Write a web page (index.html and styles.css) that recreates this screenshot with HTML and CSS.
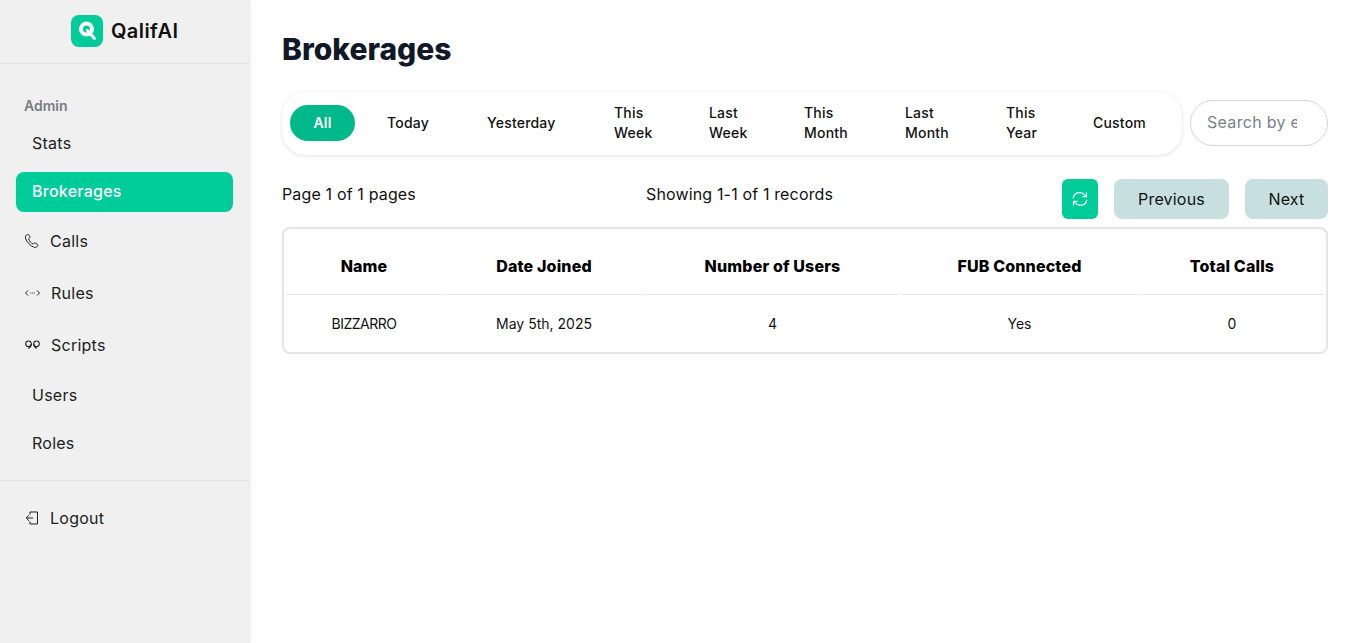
FILE: index.html
```html
<!DOCTYPE html>
<html lang="en">
<head>
    <meta charset="UTF-8">
    <meta name="viewport" content="width=device-width, initial-scale=1.0">
    <title>Brokerages</title>
    <link rel="stylesheet" href="styles.css">
</head>
<body>
    <div class="layout">
        <!-- Sidebar -->
        <aside class="sidebar">
            <div class="brand">
                <span class="brand-logo">
                    <svg viewBox="0 0 32 32" width="32" height="32" fill="none" stroke="#fff">
                        <circle cx="15.5" cy="14" r="5.500" stroke-width="4"/>
                        <path d="M16.500 15.500l7 8" stroke-width="3" stroke-linecap="round"/>
                    </svg>
                </span>
                <span class="brand-name">QalifAI</span>
            </div>
            <nav class="nav">
                <div class="nav-label">Admin</div>
                <a class="nav-item">Stats</a>
                <a class="nav-item active">Brokerages</a>
                <a class="nav-item with-icon">
                    <svg class="nav-icon" viewBox="0 0 16 16" fill="none" stroke="#222" stroke-width="1">
                        <path d="M2.200 2.200C3 1.300 4.200 1.200 4.800 2l1 1.700c.3.600.1 1.100-.4 1.500l-.8.6c.7 2.200 2.400 4.300 4.600 5.300l.7-.7c.5-.5 1.100-.6 1.700-.2l1.600 1c.8.6.8 1.600 0 2.400-1 .9-2.300 1-3.600.5C6.500 12.800 3.300 9.700 1.800 6 1.300 4.600 1.300 3.200 2.200 2.200z"/>
                    </svg>
                    Calls
                </a>
                <a class="nav-item with-icon">
                    <svg class="nav-icon wide" viewBox="0 0 17 16" fill="none" stroke="#222" stroke-width="1">
                        <path d="M4 5.500L1.500 8 4 10.500M13 5.500L15.500 8 13 10.500"/>
                        <path d="M6.300 8h.9M8.100 8h.9M9.900 8h.9" stroke-width="1.200"/>
                    </svg>
                    Rules
                </a>
                <a class="nav-item with-icon">
                    <svg class="nav-icon wide" viewBox="0 0 17 16" fill="none" stroke="#222" stroke-width="1.100">
                        <circle cx="4.500" cy="6.800" r="2.800"/>
                        <path d="M7.300 7c0 2-1.300 3.600-3 4.500"/>
                        <circle cx="12.500" cy="6.800" r="2.800"/>
                        <path d="M9.700 7c0 2 1.300 3.600 3 4.500"/>
                    </svg>
                    Scripts
                </a>
                <a class="nav-item">Users</a>
                <a class="nav-item">Roles</a>
            </nav>
            <div class="sidebar-foot">
                <a class="nav-item with-icon">
                    <svg class="nav-icon" viewBox="0 0 16 16" fill="none" stroke="#222" stroke-width="1">
                        <path d="M6 4.500V2h7.500v12H6v-2.500"/>
                        <path d="M9 8H2.500M5 5.200L2.200 8 5 10.800"/>
                    </svg>
                    Logout
                </a>
            </div>
        </aside>

        <!-- Main content -->
        <main class="main">
            <h1 class="title">Brokerages</h1>

            <div class="filters">
                <div class="tabs">
                    <button class="tab active" type="button">All</button>
                    <button class="tab" type="button">Today</button>
                    <button class="tab" type="button">Yesterday</button>
                    <button class="tab" type="button">This Week</button>
                    <button class="tab" type="button">Last Week</button>
                    <button class="tab" type="button">This Month</button>
                    <button class="tab" type="button">Last Month</button>
                    <button class="tab" type="button">This Year</button>
                    <button class="tab" type="button">Custom</button>
                </div>
                <input class="search" type="text" placeholder="Search by email">
            </div>

            <div class="pager">
                <div class="pager-text">Page 1 of 1 pages</div>
                <div class="pager-text">Showing 1-1 of 1 records</div>
                <div class="pager-actions">
                    <button class="refresh" type="button" aria-label="Refresh">
                        <svg viewBox="0 0 20 20" width="18" height="18" fill="none" stroke="#fff" stroke-width="1.300" stroke-linecap="round" stroke-linejoin="round">
                            <path d="M2.500 8.800C3.100 5.300 6.200 3 9.800 3c2.500 0 4.500 1.100 6 3l1.200 1.300"/>
                            <path d="M17.200 3.200v4.200H13"/>
                            <path d="M17.500 11.200C16.900 14.700 13.800 17 10.200 17c-2.500 0-4.500-1.100-6-3L3 12.700"/>
                            <path d="M2.800 16.800v-4.200H7"/>
                        </svg>
                    </button>
                    <button class="page-btn previous" type="button">Previous</button>
                    <button class="page-btn next" type="button">Next</button>
                </div>
            </div>

            <div class="table-wrap">
                <table class="table">
                    <colgroup>
                        <col class="col-name">
                        <col class="col-date">
                        <col class="col-users">
                        <col class="col-fub">
                        <col class="col-calls">
                    </colgroup>
                    <thead>
                        <tr>
                            <th>Name</th>
                            <th>Date Joined</th>
                            <th>Number of Users</th>
                            <th>FUB Connected</th>
                            <th>Total Calls</th>
                        </tr>
                    </thead>
                    <tbody>
                        <tr>
                            <td class="cell-name">BIZZARRO</td>
                            <td>May 5th, 2025</td>
                            <td>4</td>
                            <td>Yes</td>
                            <td>0</td>
                        </tr>
                    </tbody>
                </table>
            </div>
        </main>
    </div>
</body>
</html>
```

FILE: styles.css
```css
* {
    box-sizing: border-box;
}
body {
    margin: 0;
    font-family: Inter, "Open Sans", sans-serif;
    color: #111;
    background: #fff;
}
.layout {
    display: flex;
    height: 643px;
    overflow: hidden;
}

/* sidebar */
.sidebar {
    width: 250px;
    flex-shrink: 0;
    background: #f0f0f0;
    border-right: 1px solid #e8e8e8;
    box-shadow: 2px 0 6px rgba(0,0,0,0.04);
}
.brand {
    height: 64px;
    border-bottom: 1px solid #e5e5e5;
    padding-top: 15px;
    padding-left: 71px;
    display: flex;
    align-items: flex-start;
    gap: 8px;
}
.brand-logo {
    width: 32px;
    height: 32px;
    border-radius: 8px;
    background: #00cc99;
    display: block;
}
.brand-logo svg {
    display: block;
}
.brand-name {
    font-size: 20px;
    font-weight: 600;
    line-height: 32px;
    letter-spacing: 0.4px;
}
.nav {
    padding: 32px 16px 16px;
    border-bottom: 1px solid #e5e5e5;
    display: flex;
    flex-direction: column;
    gap: 8px;
}
.nav-label {
    font-size: 14px;
    font-weight: 600;
    color: #7b7b85;
    padding-left: 8px;
    height: 20px;
    line-height: 20px;
}
.nav-item {
    display: flex;
    align-items: center;
    height: 40px;
    padding: 0 16px 2px;
    border-radius: 8px;
    font-size: 16px;
    letter-spacing: 0.25px;
    color: #222;
}
.nav-item.with-icon {
    height: 44px;
    padding-left: 8px;
    gap: 10px;
}
.nav-item.active {
    background: #00cc99;
    color: #fff;
    font-weight: 500;
}
.nav-icon {
    width: 16px;
    height: 16px;
    flex-shrink: 0;
}
.nav-icon.wide {
    width: 17px;
}
.sidebar-foot {
    padding: 16px;
}

/* main */
.main {
    flex: 1;
    min-width: 0;
    padding: 32px 38px 0 32px;
}
.title {
    margin: 0 0 26px;
    font-size: 30px;
    font-weight: 800;
    line-height: 34px;
    color: #111827;
}
.filters {
    display: flex;
    align-items: center;
    gap: 8px;
}
.tabs {
    display: grid;
    grid-template-columns: 65px 92px 119px 87px 87px 93px 93px 79px 103px;
    column-gap: 8px;
    width: 900px;
    height: 63px;
    padding: 0 8px 1px;
    align-items: center;
    background: #fff;
    border-radius: 24px;
    box-shadow: 0 1px 4px rgba(0,0,0,0.12);
}
.tab {
    border: none;
    background: none;
    padding: 0 24px;
    font-family: inherit;
    font-size: 14px;
    font-weight: 500;
    line-height: 20px;
    letter-spacing: 0.2px;
    text-align: left;
    color: #111;
}
.tab.active {
    height: 36px;
    padding: 0;
    text-align: center;
    border-radius: 18px;
    background: #00b98a;
    color: #fff;
    font-weight: 600;
}
.search {
    width: 138px;
    height: 46px;
    margin-bottom: 2px;
    padding: 0 30px 2px 16px;
    border: 1px solid #d4d4d4;
    border-radius: 23px;
    font-family: inherit;
    font-size: 16px;
    letter-spacing: 0.3px;
    outline: none;
}
.search::placeholder {
    color: #7a8288;
}
.pager {
    display: grid;
    grid-template-columns: 364px 1fr auto;
    align-items: center;
    margin-top: 24px;
    font-size: 16px;
}
.pager-text {
    padding-bottom: 10px;
    letter-spacing: 0.15px;
}
.pager-actions {
    display: flex;
    gap: 16px;
}
.refresh {
    width: 36px;
    height: 40px;
    border: none;
    border-radius: 6px;
    background: #00cc99;
    padding: 0;
    display: flex;
    align-items: center;
    justify-content: center;
}
.page-btn {
    height: 40px;
    border: none;
    border-radius: 8px;
    background: #c8dfe0;
    font-family: inherit;
    font-size: 16px;
    letter-spacing: 0.2px;
    color: #111;
}
.page-btn.previous {
    width: 115px;
}
.page-btn.next {
    width: 83px;
}

/* table */
.table-wrap {
    margin-top: 8px;
    border: 2px solid #e5e5e5;
    border-radius: 8px;
}
.table {
    width: 100%;
    table-layout: fixed;
    border-collapse: separate;
    border-spacing: 2px 0;
}
.col-name { width: 156px; }
.col-date { width: 200px; }
.col-users { width: 253px; }
.col-fub { width: 237px; }
.table th {
    height: 66px;
    padding-top: 10px;
    font-size: 16px;
    font-weight: 800;
    letter-spacing: 0.15px;
    color: #000;
    border-bottom: 1px solid #e5e5e5;
}
.table td {
    height: 57px;
    padding-bottom: 1px;
    text-align: center;
    font-size: 14px;
}
.table td.cell-name {
    letter-spacing: -0.5px;
}
```
